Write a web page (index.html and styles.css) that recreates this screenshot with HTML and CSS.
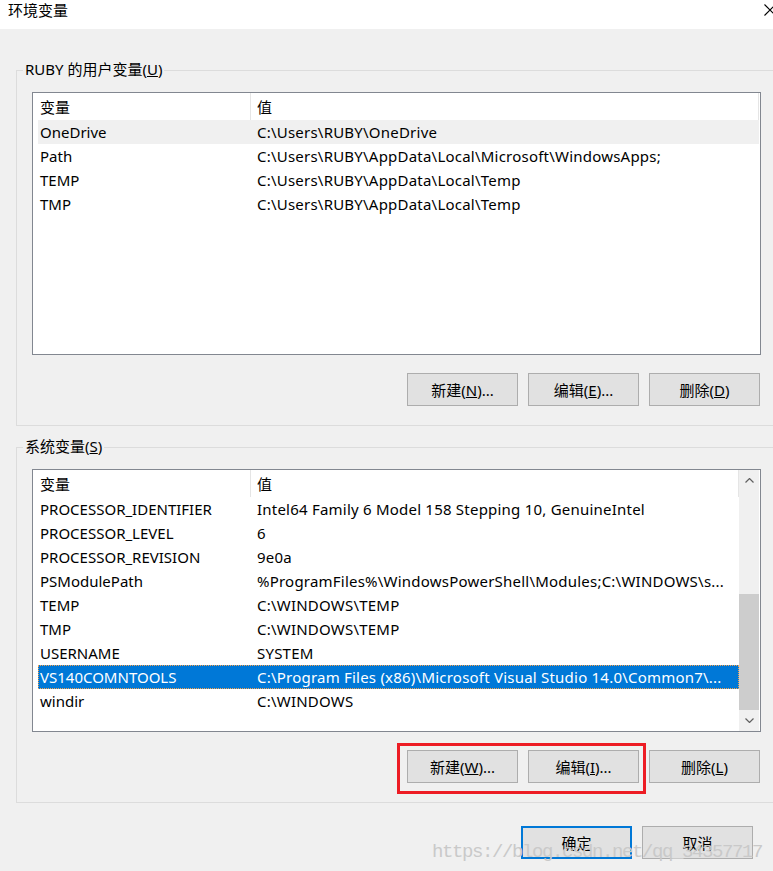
FILE: index.html
```html
<!DOCTYPE html>

<html lang="zh-CN">
<head>
  <meta charset="utf-8">

  <link rel="stylesheet" href="styles.css">

</head>

<body>

<div class="window">
  <div class="title-bar">
    <div class="title">环境变量</div>
    <svg class="close" width="12" height="12" viewBox="0 0 12 12">
      <path d="M0.5 0.5 L11.5 11.5 M11.5 0.5 L0.5 11.5" stroke="#000" stroke-width="1.1" fill="none"/>
    </svg>
  </div>

  <div class="dialog-body">

    <div class="group">
      <div class="group-label">RUBY 的用户变量(<u>U</u>)</div>
      <div class="list">
        <div class="list-main">
          <div class="list-head">
            <div class="cell name">变量</div>
            <div class="cell value">值</div>
          </div>
          <div class="list-row hot">
            <div class="cell name">OneDrive</div>
            <div class="cell value">C:\Users\RUBY\OneDrive</div>
          </div>
          <div class="list-row">
            <div class="cell name">Path</div>
            <div class="cell value">C:\Users\RUBY\AppData\Local\Microsoft\WindowsApps;</div>
          </div>
          <div class="list-row">
            <div class="cell name">TEMP</div>
            <div class="cell value">C:\Users\RUBY\AppData\Local\Temp</div>
          </div>
          <div class="list-row">
            <div class="cell name">TMP</div>
            <div class="cell value">C:\Users\RUBY\AppData\Local\Temp</div>
          </div>
        </div>
      </div>
      <div class="button-row">
        <div class="button">新建(<u>N</u>)...</div>
        <div class="button">编辑(<u>E</u>)...</div>
        <div class="button">删除(<u>D</u>)</div>
      </div>
    </div>

    <div class="group">
      <div class="group-label">系统变量(<u>S</u>)</div>
      <div class="list">
        <div class="list-main">
          <div class="list-head">
            <div class="cell name">变量</div>
            <div class="cell value">值</div>
          </div>
          <div class="list-row">
            <div class="cell name">PROCESSOR_IDENTIFIER</div>
            <div class="cell value">Intel64 Family 6 Model 158 Stepping 10, GenuineIntel</div>
          </div>
          <div class="list-row">
            <div class="cell name">PROCESSOR_LEVEL</div>
            <div class="cell value">6</div>
          </div>
          <div class="list-row">
            <div class="cell name">PROCESSOR_REVISION</div>
            <div class="cell value">9e0a</div>
          </div>
          <div class="list-row">
            <div class="cell name">PSModulePath</div>
            <div class="cell value">%ProgramFiles%\WindowsPowerShell\Modules;C:\WINDOWS\s...</div>
          </div>
          <div class="list-row">
            <div class="cell name">TEMP</div>
            <div class="cell value">C:\WINDOWS\TEMP</div>
          </div>
          <div class="list-row">
            <div class="cell name">TMP</div>
            <div class="cell value">C:\WINDOWS\TEMP</div>
          </div>
          <div class="list-row">
            <div class="cell name">USERNAME</div>
            <div class="cell value">SYSTEM</div>
          </div>
          <div class="list-row selected">
            <div class="cell name">VS140COMNTOOLS</div>
            <div class="cell value">C:\Program Files (x86)\Microsoft Visual Studio 14.0\Common7\...</div>
          </div>
          <div class="list-row">
            <div class="cell name">windir</div>
            <div class="cell value">C:\WINDOWS</div>
          </div>
        </div>
        <div class="scrollbar">
          <div class="scroll-arrow">
            <svg width="9" height="5" viewBox="0 0 9 5"><path d="M0.5 4.5 L4.5 0.5 L8.5 4.5" stroke="#606060" stroke-width="1.2" fill="none"/></svg>
          </div>
          <div class="scroll-track">
            <div class="scroll-thumb"></div>
          </div>
          <div class="scroll-arrow">
            <svg width="9" height="5" viewBox="0 0 9 5"><path d="M0.5 0.5 L4.5 4.5 L8.5 0.5" stroke="#606060" stroke-width="1.2" fill="none"/></svg>
          </div>
        </div>
      </div>
      <div class="button-row">
        <div class="marked">
          <div class="button">新建(<u>W</u>)...</div>
          <div class="button">编辑(<u>I</u>)...</div>
        </div>
        <div class="button">删除(<u>L</u>)</div>
      </div>
    </div>

    <div class="footer">
      <div class="button default">确定</div>
      <div class="button">取消</div>
    </div>

  </div>

  <div class="watermark">https://blog.csdn.net/qq_34357717</div>
</div>

</body>

</html>
```

FILE: styles.css
```css
* {
  box-sizing: border-box;
  }

html, body {
  overflow: hidden;
  }

body {
  margin: 0;
  background-color: #f0f0f0;
  font-family: "Noto Sans", "Noto Sans CJK SC", sans-serif;
  font-size: 15px;
  color: #000;
  }

.window {
  position: relative;
  width: 790px;
  height: 871px;
  }

.title-bar {
  display: flex;
  align-items: flex-start;
  height: 29px;
  background-color: #fff;
  }

.title {
  padding: 0 0 0 8px;
  line-height: 20px;
  }

.close {
  margin: 4px 14px 0 auto;
  }

.dialog-body {
  padding: 41px 0 0 16px;
  }

.group {
  width: 761px;
  border: 1px solid #dcdcdc;
  padding: 0 15px 19px 15px;
  }

.group + .group {
  margin-top: 21px;
  }

.group-label {
  width: max-content;
  margin: -12px 0 0 -9px;
  padding: 0 2px;
  line-height: 20px;
  background-color: #f0f0f0;
  }

.list {
  display: flex;
  height: 263px;
  margin-top: 13px;
  padding: 0 1px 0 5px;
  border: 1px solid #828790;
  background-color: #fff;
  }

.list-main {
  flex: 1;
  min-width: 0;
  }

.list-head {
  display: flex;
  height: 27px;
  line-height: 28px;
  border-right: 1px solid #e5e5e5;
  }

.list-row {
  display: flex;
  height: 24px;
  line-height: 24px;
  }

.cell {
  white-space: nowrap;
  overflow: hidden;
  }

.name {
  width: 213px;
  flex-shrink: 0;
  padding-left: 2px;
  }

.list-head .name {
  border-right: 1px solid #e5e5e5;
  }

.value {
  flex: 1;
  padding-left: 6px;
  letter-spacing: 0.22px;
  }

.hot {
  background-color: #f0f0f0;
  }

.selected {
  background-color: #0078d7;
  color: #fff;
  outline: 1px dotted #f7a24c;
  outline-offset: -1px;
  }

.scrollbar {
  display: flex;
  flex-direction: column;
  width: 20px;
  background-color: #f0f0f0;
  }

.scroll-arrow {
  display: flex;
  justify-content: center;
  align-items: center;
  height: 21px;
  }

.scroll-track {
  flex: 1;
  display: flex;
  flex-direction: column;
  }

.scroll-thumb {
  margin-top: auto;
  height: 116px;
  background-color: #cdcdcd;
  }

.button-row {
  display: flex;
  justify-content: flex-end;
  gap: 10px;
  margin-top: 18px;
  padding-right: 1px;
  }

.button {
  display: flex;
  justify-content: center;
  align-items: center;
  width: 111px;
  height: 33px;
  border: 1px solid #adadad;
  background-color: #e1e1e1;
  }

.button.default {
  border: 2px solid #0078d7;
  }

/* the red box drawn over the screenshot */
.marked {
  position: relative;
  display: flex;
  gap: 10px;
  }

.marked::after {
  content: "";
  position: absolute;
  left: -10px;
  top: -7px;
  right: -7px;
  bottom: -11px;
  border: 3px solid #ed1c24;
  }

.footer {
  display: flex;
  justify-content: flex-end;
  gap: 10px;
  margin-top: 23px;
  padding-right: 37px;
  }

.watermark {
  position: absolute;
  left: 432px;
  top: 842px;
  font-family: "Liberation Mono", monospace;
  font-size: 19px;
  line-height: 20px;
  letter-spacing: -1.4px;
  color: #c9c9c9;
  white-space: nowrap;
  }
```
